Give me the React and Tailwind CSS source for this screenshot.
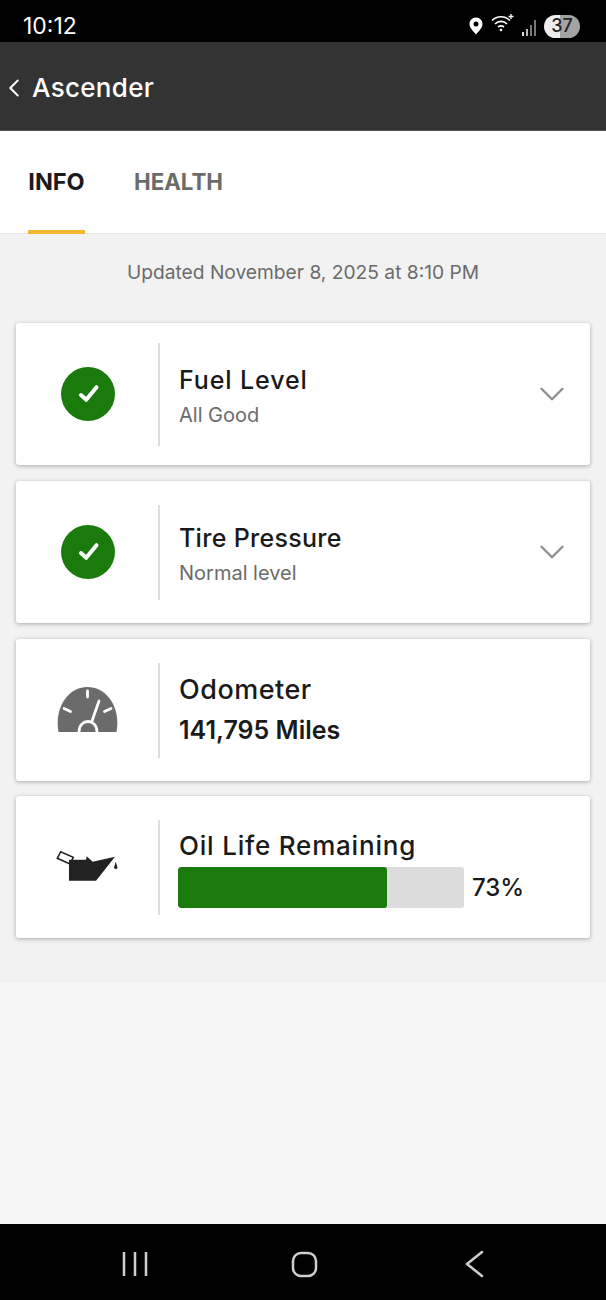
import { ChevronDown, ChevronLeft } from "lucide-react";

const font = { fontFamily: "Inter, 'Noto Sans', sans-serif" };

function CheckIcon() {
  return (
    <div className="ml-px flex h-[54px] w-[54px] items-center justify-center rounded-full bg-[#1a7a0c]">
      <svg width="26" height="26" viewBox="0 0 26 26" fill="none">
        <path d="M6 14 L11.200 18.800 L21.500 6.200" stroke="#fff" strokeWidth="4" strokeLinecap="round" strokeLinejoin="round" />
      </svg>
    </div>
  );
}

function GaugeIcon() {
  return (
    <svg width="64" height="48" viewBox="0 0 64 48" fill="none">
      <path d="M3.500 46 C-1 22 13 1 32.500 1 C52 1 66 22 61.500 46 Z" fill="#6b6b6b" />
      <path d="M32.500 5 V11" stroke="#fff" strokeWidth="2.800" strokeLinecap="round" />
      <path d="M9 22.500 L15.500 25.500" stroke="#fff" strokeWidth="2.800" strokeLinecap="round" />
      <path d="M56 22.500 L49.500 25.500" stroke="#fff" strokeWidth="2.800" strokeLinecap="round" />
      <path d="M37 35 L44 15" stroke="#fff" strokeWidth="2.800" strokeLinecap="round" />
      <path d="M24 46 C24 32 42 32 42 46" stroke="#fff" strokeWidth="2.800" />
    </svg>
  );
}

function OilIcon() {
  return (
    <svg width="64" height="36" viewBox="0 0 64 36" fill="none">
      <path d="M2.300 9.300 L5.700 2.700 L18.300 8.300 L15 15 Z" stroke="#222" strokeWidth="1.600" fill="#fff" />
      <path d="M14 10.700 H31 L31.700 7.300 L37.700 12.700 L60 7.700 L41 31.700 H14 Z" fill="#222" />
      <path d="M60.700 12.700 L62.500 18.500 A1.800 2 0 0 1 59 18.500 Z" fill="#222" />
    </svg>
  );
}

function Card({ icon, className = "", dividerClass = "h-[95px]", children }) {
  return (
    <div className={`flex h-[142px] items-center rounded-[3px] bg-white shadow-[0_1px_4px_rgba(0,0,0,0.3)] ${className}`}>
      <div className="flex w-[142px] shrink-0 items-center justify-center">{icon}</div>
      <div className={`w-[2px] shrink-0 bg-[#dedede] ${dividerClass}`} />
      <div className="flex min-w-0 flex-1 items-center pl-[19px] pr-[24px]">{children}</div>
    </div>
  );
}

function StatusCard({ title, sub, titleClass, dividerClass }) {
  return (
    <Card icon={<CheckIcon />} dividerClass={dividerClass}>
      <div className="flex-1 pt-[3px]">
        <div className={`text-[25px] font-medium leading-[30px] text-[#1a1a1a] ${titleClass}`}>{title}</div>
        <div className="mt-[8px] text-[20px] leading-[24px] text-[#6b6b6b]">{sub}</div>
      </div>
      <ChevronDown size={42} strokeWidth={1.4} className="-mr-[7px] text-[#8f8f8f]" />
    </Card>
  );
}

export default function App() {
  return (
    <div className="flex h-[1300px] w-[606px] flex-col overflow-hidden bg-[#f7f7f7]" style={font}>
      {/* status bar */}
      <div className="flex h-[42px] shrink-0 items-center justify-between bg-black pl-[23px] pr-[26px] pt-[10px] text-white">
        <span className="text-[23px] leading-none">10:12</span>
        <div className="flex items-center">
          <svg width="14" height="18" viewBox="0 0 14 18" className="mr-[8px]">
            <path d="M7 0.500 C3 0.500 0.500 3.500 0.500 7 C0.500 11 5 15 7 17.500 C9 15 13.500 11 13.500 7 C13.500 3.500 11 0.500 7 0.500 Z" fill="#fff" />
            <circle cx="7" cy="7" r="2.500" fill="#000" />
          </svg>
          <svg width="24" height="20" viewBox="0 0 24 20" fill="none" className="mb-[6px] mr-[7px]">
            <path d="M1 7.500 C6 2.500 14 2.500 19 7.500" stroke="#fff" strokeWidth="1.600" />
            <path d="M4 11 C7.500 7.500 12.500 7.500 16 11" stroke="#fff" strokeWidth="1.600" />
            <path d="M7 14 C9 12.500 11 12.500 13 14" stroke="#fff" strokeWidth="1.600" />
            <circle cx="10" cy="17" r="1.300" fill="#fff" />
            <path d="M20 1 V6 M17.500 3.500 H22.500" stroke="#fff" strokeWidth="1.300" />
          </svg>
          <svg width="16" height="17" viewBox="0 0 16 17" className="mr-[6px] mt-[2px]">
            <rect x="0" y="13" width="2" height="4" fill="#ddd" />
            <rect x="4" y="10" width="2" height="7" fill="#bbb" />
            <rect x="8" y="6" width="2" height="11" fill="#777" />
            <rect x="12" y="1" width="2" height="16" fill="#777" />
          </svg>
          <div className="flex h-[23px] w-[36px] items-center justify-center rounded-full bg-[linear-gradient(90deg,#eeeeee_0%,#eeeeee_45%,#a3a3a3_45%,#a3a3a3_100%)] text-[18px] font-medium leading-none text-[#222]">
            37
          </div>
        </div>
      </div>

      {/* header */}
      <div className="flex h-[89px] shrink-0 items-center border-b border-[#555] bg-[#333333] pt-[3px] text-white">
        <ChevronLeft size={30} strokeWidth={1.6} className="-ml-px" />
        <span className="ml-[3px] text-[26px] font-medium leading-none tracking-[0.3px]">Ascender</span>
      </div>

      {/* tabs */}
      <div className="flex h-[103px] shrink-0 border-b border-[#e8e8e8] bg-white pl-[28px]">
        <div className="flex h-[103px] w-[57px] items-center justify-center border-b-[4px] border-[#f0b930] pt-[3px] text-[23.500px] font-bold leading-none text-[#1a1a1a]">
          INFO
        </div>
        <div className="ml-[49px] flex h-[103px] items-center pb-[1px] text-[22.300px] font-bold leading-none text-[#6b6b6b]">
          HEALTH
        </div>
      </div>

      {/* content */}
      <div className="h-[749px] shrink-0 bg-[#f2f2f2] px-[16px]">
        <div className="flex h-[89px] items-center justify-center pb-[12px] text-[19.200px] text-[#6b6b6b]">
          Updated November 8, 2025 at 8:10 PM
        </div>
        <div className="flex flex-col gap-[16px]">
          <StatusCard title="Fuel Level" sub="All Good" titleClass="tracking-[0.9px]" dividerClass="h-[103px]" />
          <StatusCard title="Tire Pressure" sub="Normal level" titleClass="tracking-[0.3px]" />
          <Card icon={<GaugeIcon />}>
            <div className="text-[#1a1a1a]">
              <div className="text-[27px] font-medium leading-[40px] tracking-[0.5px]">Odometer</div>
              <div className="text-[25px] font-semibold leading-[40px]">141,795 Miles</div>
            </div>
          </Card>
          <Card icon={<OilIcon />} className="-mt-px">
            <div className="flex-1 pt-[4px]">
              <div className="text-[26px] font-medium leading-[30px] tracking-[0.8px] text-[#1a1a1a]">Oil Life Remaining</div>
              <div className="-ml-px mt-[6px] flex items-center">
                <div className="h-[41px] w-[286px] overflow-hidden rounded-[3px] bg-[#dcdcdc]">
                  <div className="h-full w-[73%] rounded-[3px] bg-[#1a7a0c]" />
                </div>
                <span className="ml-[8px] pt-[2px] text-[24px] font-medium leading-none text-[#1a1a1a]">73%</span>
              </div>
            </div>
          </Card>
        </div>
      </div>

      {/* filler */}
      <div className="flex-1 bg-[#f7f7f7]" />

      {/* nav bar */}
      <div className="flex h-[76px] shrink-0 items-center justify-center bg-black">
        <svg width="606" height="76" viewBox="0 0 606 76" fill="none" stroke="#cfcfcf" strokeWidth="2.500">
          <path d="M124 28 V52 M135 28 V52 M146 28 V52" />
          <rect x="293" y="29" width="23" height="23" rx="8" />
          <path d="M482 28 L467 40 L482 52" strokeLinecap="round" strokeLinejoin="round" />
        </svg>
      </div>
    </div>
  );
}
